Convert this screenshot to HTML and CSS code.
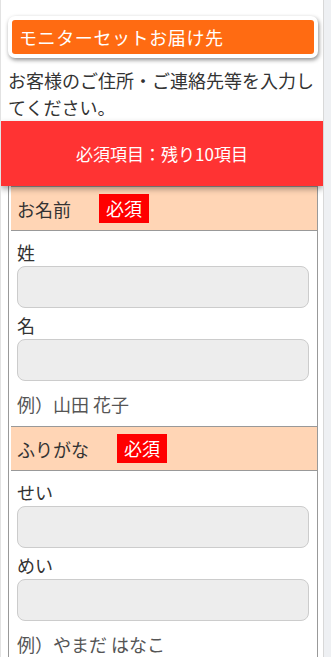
FILE: index.html
```html
<!DOCTYPE html>
<html lang="ja">
<head>
<meta charset="utf-8">
<title>モニターセットお届け先</title>
<link rel="stylesheet" href="styles.css">
</head>
<body>
<div class="page">
  <div class="title-box"><h2 class="title">モニターセットお届け先</h2></div>
  <p class="lead">お客様のご住所・ご連絡先等を入力してください。</p>
  <div class="counter">必須項目：残り10項目</div>
  <div class="form">
    <section class="group">
      <div class="group-head"><span class="group-title">お名前</span><span class="req">必須</span></div>
      <div class="group-body">
        <label class="field-label">姓</label>
        <input class="field" type="text">
        <label class="field-label">名</label>
        <input class="field" type="text">
        <p class="example">例）山田 花子</p>
      </div>
    </section>
    <section class="group">
      <div class="group-head"><span class="group-title">ふりがな</span><span class="req">必須</span></div>
      <div class="group-body">
        <label class="field-label">せい</label>
        <input class="field" type="text">
        <label class="field-label">めい</label>
        <input class="field" type="text">
        <p class="example">例）やまだ はなこ</p>
      </div>
    </section>
  </div>
</div>
</body>
</html>
```
FILE: styles.css
```css
html {
  background: #eef0f3;
}
body {
  margin: 0;
  font-family: "Noto Sans CJK JP", "Noto Sans", sans-serif;
  color: #333;
}
.page {
  box-sizing: border-box;
  width: 324px;
  min-height: 100vh;
  background: #fff;
  border-left: 1px solid #e2e2e2;
  border-right: 1px solid #d8d8d8;
  padding-top: 16px;
  overflow: hidden;
}
.title-box {
  margin: 0 5px 0 7px;
  padding: 4px;
  background: #fff;
  border-radius: 7px;
  box-shadow: 1px 2px 4px rgba(0, 0, 0, 0.45);
}
.title {
  margin: 0;
  height: 34px;
  line-height: 34px;
  padding-left: 7px;
  background: #ff6b12;
  border-radius: 3px;
  color: #fff;
  font-size: 18px;
  font-weight: normal;
  letter-spacing: 0.6px;
}
.lead {
  margin: 9px 0 0;
  padding-left: 7px;
  font-size: 18px;
  line-height: 27px;
  color: #333;
}
.counter {
  position: relative;
  z-index: 1;
  height: 65px;
  line-height: 65px;
  background: #ff3333;
  color: #fff;
  text-align: center;
  font-size: 17px;
  box-shadow: 0 3px 6px rgba(0, 0, 0, 0.35);
}
.form {
  margin: 0 5px 0 7px;
  border-left: 1px solid #999;
  border-right: 1px solid #999;
}
.group-head {
  display: flex;
  align-items: center;
  height: 43px;
  margin-left: 2px;
  padding-left: 6px;
  background: #ffd5b5;
  border-top: 1px solid #999;
  border-bottom: 1px solid #999;
}
.group-title {
  font-size: 18px;
  color: #333;
}
.req {
  margin-left: 28px;
  padding: 0 7px;
  height: 29px;
  line-height: 29px;
  background: #ff0000;
  color: #fff;
  font-size: 18px;
}
.group-body {
  padding: 9px 8px 10px;
}
.field-label {
  display: block;
  font-size: 18px;
  line-height: 24px;
  margin-bottom: 2px;
  color: #333;
}
.field {
  display: block;
  box-sizing: border-box;
  width: 100%;
  height: 42px;
  margin: 0 0 5px;
  background: #ededed;
  border: 1px solid #cccccc;
  border-radius: 8px;
}
.example {
  margin: 11px 0 0;
  font-size: 18px;
  line-height: 24px;
  color: #555;
}
```
